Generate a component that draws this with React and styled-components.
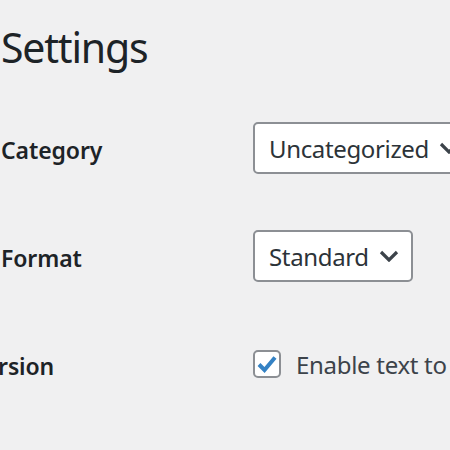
import React from "react";
import styled, { createGlobalStyle } from "styled-components";

const Global = createGlobalStyle`
  html, body { margin: 0; padding: 0; background: #f0f0f1; }
  body { font-family: "Noto Sans", "Open Sans", sans-serif; color: #1d2327; overflow: hidden; }
`;

const Page = styled.div`
  width: 450px;
  height: 450px;
  overflow: hidden;
  padding-left: 1px;
  box-sizing: border-box;
`;

const Title = styled.h1`
  margin: 0;
  height: 94px;
  padding-top: 21px;
  box-sizing: border-box;
  font-size: 41px;
  font-weight: 400;
  line-height: 52px;
  letter-spacing: -1.2px;
  color: #1d2327;
`;

const Form = styled.div`
  display: grid;
  grid-template-columns: 252px 1fr;
  grid-auto-rows: 108px;
  align-items: center;
`;

const Label = styled.div`
  font-size: 23px;
  font-weight: 600;
  color: #1d2327;
  white-space: nowrap;
  letter-spacing: -0.1px;
  margin-left: ${(p) => p.$shift || 0}px;
  padding-top: 4px;
`;

const Field = styled.div`
  display: flex;
  align-items: center;
  white-space: nowrap;
  min-width: 0;
`;

const Select = styled.div`
  display: inline-flex;
  align-items: center;
  gap: 10px;
  height: 52px;
  box-sizing: border-box;
  padding: 0 12px 0 14px;
  background: #fff;
  border: 2px solid #8c8f94;
  border-radius: 5px;
  font-size: 24px;
  color: #2c3338;
  letter-spacing: -0.35px;
  flex-shrink: 0;
`;

const Check = styled.span`
  width: 28px;
  height: 28px;
  box-sizing: border-box;
  border: 2px solid #8c8f94;
  border-radius: 5px;
  background: #fff;
  display: inline-flex;
  align-items: center;
  justify-content: center;
  flex-shrink: 0;
`;

const CheckText = styled.span`
  margin-left: 15px;
  font-size: 24px;
  color: #3c434a;
  letter-spacing: -0.3px;
`;

const Chevron = () => (
  <svg width="20" height="12" viewBox="0 0 20 12">
    <polyline points="2,2 10,10 18,2" fill="none" stroke="#3c434a" strokeWidth="3.2" />
  </svg>
);

const Tick = () => (
  <svg width="22" height="20" viewBox="0 0 22 20">
    <path d="M3 10.5 L8.5 16 L19 3.5" fill="none" stroke="#3582c4" strokeWidth="4" strokeLinejoin="miter" />
  </svg>
);

export default function App() {
  return (
    <Page>
      <Global />
      <Title>Settings</Title>
      <Form>
        <Label>Category</Label>
        <Field>
          <Select>
            Uncategorized
            <Chevron />
          </Select>
        </Field>
        <Label>Format</Label>
        <Field>
          <Select>
            Standard
            <Chevron />
          </Select>
        </Field>
        <Label $shift={-3}>rsion</Label>
        <Field>
          <Check>
            <Tick />
          </Check>
          <CheckText>Enable text to</CheckText>
        </Field>
      </Form>
    </Page>
  );
}
